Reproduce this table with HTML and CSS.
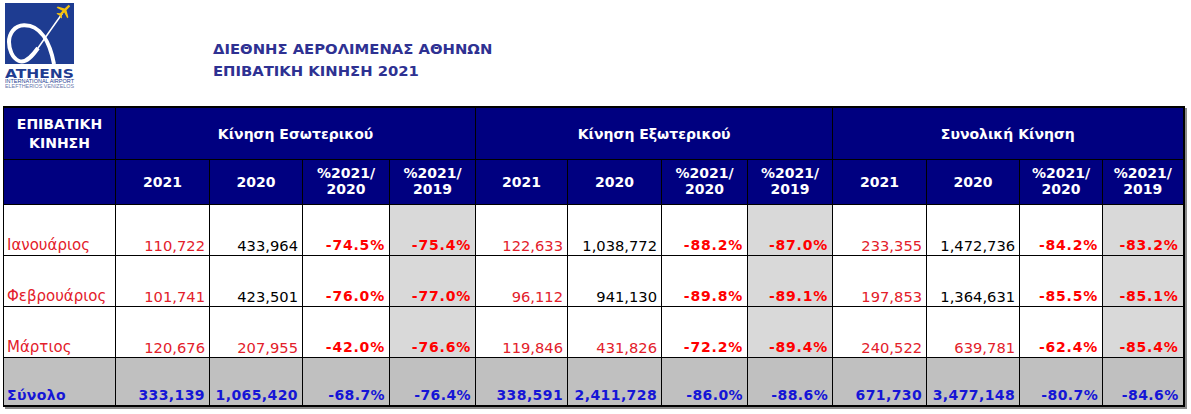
FILE: index.html
```html
<!DOCTYPE html>
<html lang="el">
<head>
<meta charset="utf-8">
<title>Επιβατική Κίνηση 2021</title>
<link rel="stylesheet" href="styles.css">
</head>
<body>
<div class="page">
  <header class="top">
    <svg class="logo" width="70" height="86" viewBox="0 0 70 86" aria-label="Athens International Airport">
      <rect x="0" y="0" width="69" height="61" fill="#1e3c91"/>
      <path d="M49,61 C45,40 36,22 19,22.3 C9,22.5 4,31 4,39 C4,46 7,55 14,58 C21,61 28,52 33,45" fill="none" stroke="#fff" stroke-width="4" stroke-linecap="butt"/>
      <path d="M32,46.5 C40,35 49,22 57,11" fill="none" stroke="#fff" stroke-width="1.5" stroke-linecap="round"/>
      <g transform="translate(59.5,7.5) rotate(45)" fill="#f4c20d">
        <path d="M-1.1,-7 L1.1,-7 L1.3,-1.5 L7.5,2 L7.5,3.6 L1.3,1.6 L1.1,5 L3.3,6.8 L3.3,8 L0,7 L-3.3,8 L-3.3,6.8 L-1.1,5 L-1.3,1.6 L-7.5,3.6 L-7.5,2 L-1.3,-1.5 Z"/>
      </g>
      <text x="0" y="74.5" class="logo-big" textLength="69" lengthAdjust="spacingAndGlyphs">ATHENS</text>
      <text x="0" y="80" class="logo-small" textLength="69" lengthAdjust="spacingAndGlyphs">INTERNATIONAL AIRPORT</text>
      <text x="0" y="85" class="logo-small logo-light" textLength="69" lengthAdjust="spacingAndGlyphs">ELEFTHERIOS VENIZELOS</text>
    </svg>
    <div class="titles">
      <div class="title">ΔΙΕΘΝΗΣ ΑΕΡΟΛΙΜΕΝΑΣ ΑΘΗΝΩΝ</div>
      <div class="title">ΕΠΙΒΑΤΙΚΗ ΚΙΝΗΣΗ 2021</div>
    </div>
  </header>

  <div class="table-wrap">
  <table class="stats">
    <colgroup>
      <col class="c0"><col class="c1"><col class="c2"><col class="c3"><col class="c4">
      <col class="c5"><col class="c6"><col class="c7"><col class="c8">
      <col class="c9"><col class="c10"><col class="c11"><col class="c12">
    </colgroup>
    <thead>
      <tr class="h1">
        <th class="lead">ΕΠΙΒΑΤΙΚΗ<br>ΚΙΝΗΣΗ</th>
        <th colspan="4">Κίνηση Εσωτερικού</th>
        <th colspan="4">Κίνηση Εξωτερικού</th>
        <th colspan="4">Συνολική Κίνηση</th>
      </tr>
      <tr class="h2">
        <th></th>
        <th>2021</th><th>2020</th><th class="pct">%2021/<br>2020</th><th class="pct">%2021/<br>2019</th>
        <th>2021</th><th>2020</th><th class="pct">%2021/<br>2020</th><th class="pct">%2021/<br>2019</th>
        <th>2021</th><th>2020</th><th class="pct">%2021/<br>2020</th><th class="pct">%2021/<br>2019</th>
      </tr>
    </thead>
    <tbody>
      <tr class="row">
        <td class="month">Ιανουάριος</td>
        <td class="red">110,722</td><td>433,964</td><td class="p">-74.5%</td><td class="p shade">-75.4%</td>
        <td class="red">122,633</td><td>1,038,772</td><td class="p">-88.2%</td><td class="p shade">-87.0%</td>
        <td class="red">233,355</td><td>1,472,736</td><td class="p">-84.2%</td><td class="p shade">-83.2%</td>
      </tr>
      <tr class="row">
        <td class="month">Φεβρουάριος</td>
        <td class="red">101,741</td><td>423,501</td><td class="p">-76.0%</td><td class="p shade">-77.0%</td>
        <td class="red">96,112</td><td>941,130</td><td class="p">-89.8%</td><td class="p shade">-89.1%</td>
        <td class="red">197,853</td><td>1,364,631</td><td class="p">-85.5%</td><td class="p shade">-85.1%</td>
      </tr>
      <tr class="row">
        <td class="month">Μάρτιος</td>
        <td class="red">120,676</td><td class="red">207,955</td><td class="p">-42.0%</td><td class="p shade">-76.6%</td>
        <td class="red">119,846</td><td class="red">431,826</td><td class="p">-72.2%</td><td class="p shade">-89.4%</td>
        <td class="red">240,522</td><td class="red">639,781</td><td class="p">-62.4%</td><td class="p shade">-85.4%</td>
      </tr>
      <tr class="total">
        <td class="month">Σύνολο</td>
        <td>333,139</td><td>1,065,420</td><td>-68.7%</td><td>-76.4%</td>
        <td>338,591</td><td>2,411,728</td><td>-86.0%</td><td>-88.6%</td>
        <td>671,730</td><td>3,477,148</td><td>-80.7%</td><td>-84.6%</td>
      </tr>
    </tbody>
  </table>
  </div>
</div>
</body>
</html>
```

FILE: styles.css
```css
html, body {
  margin: 0;
  padding: 0;
  background: #ffffff;
}

body {
  font-family: "DejaVu Sans", Verdana, sans-serif;
}

.page {
  padding: 3px 0 0 3px;
}

.top {
  display: flex;
  align-items: flex-start;
  height: 103px;
}

.logo {
  display: block;
  margin-left: 2px;
  flex: none;
}

.logo-big {
  font-family: "DejaVu Sans", sans-serif;
  font-weight: bold;
  font-size: 13px;
  fill: #1e3c91;
}

.logo-small {
  font-family: "Liberation Sans", sans-serif;
  font-size: 4.6px;
  fill: #1e3c91;
}

.logo-light {
  fill: #6a78ad;
}

.titles {
  margin-left: 138px;
  padding-top: 35px;
}

.title {
  font-size: 14.8px;
  line-height: 22px;
  font-weight: bold;
  color: #2e3192;
  white-space: nowrap;
}

.table-wrap {
  display: inline-block;
  box-shadow: 2px 2px 0 #8a8a8a;
}

.stats {
  border-collapse: collapse;
  table-layout: fixed;
  width: 1180px;
  font-size: 14px;
  border-top: 2px solid #000;
  border-left: 1px solid #000;
  border-right: 2px solid #000;
  border-bottom: 2px solid #000;
}

.c0 { width: 112px; }
.c1 { width: 94px; }
.c2 { width: 93px; }
.c3 { width: 87px; }
.c4 { width: 86px; }
.c5 { width: 92px; }
.c6 { width: 94px; }
.c7 { width: 86px; }
.c8 { width: 85px; }
.c9 { width: 94px; }
.c10 { width: 93px; }
.c11 { width: 83px; }
.c12 { width: 81px; }

.stats th,
.stats td {
  border: 1px solid #000;
  padding: 0;
  overflow: hidden;
  white-space: nowrap;
}

.stats th {
  background: #000080;
  color: #ffffff;
  font-weight: bold;
  text-align: center;
  vertical-align: middle;
}

.h1 th {
  height: 51px;
}

.h1 .lead {
  line-height: 19px;
}

.h2 th {
  height: 42px;
  line-height: 16px;
}

.h2 .pct {
  padding-bottom: 2px;
}

.stats td {
  text-align: right;
  vertical-align: bottom;
  padding: 0 4px 1px 0;
  color: #000;
  line-height: 17px;
  font-size: 14.7px;
}

.row td {
  height: 31px;
  padding-top: 18px;
  background: #ffffff;
}

.stats td.month {
  text-align: left;
  padding-left: 3px;
  color: #e3202a;
  font-size: 15px;
}

.stats td.red {
  color: #e3202a;
}

.stats td.p {
  color: #ff0000;
  font-weight: bold;
  font-size: 14px;
  letter-spacing: 0.8px;
}

.row td.shade {
  background: #d9d9d9;
}

.total td {
  height: 28px;
  padding-top: 18px;
  background: #c0c0c0;
  color: #1515d6;
  font-weight: bold;
  font-size: 14px;
  letter-spacing: 0.4px;
}

.stats .total td.month {
  color: #1515d6;
  font-size: 14px;
}
```
